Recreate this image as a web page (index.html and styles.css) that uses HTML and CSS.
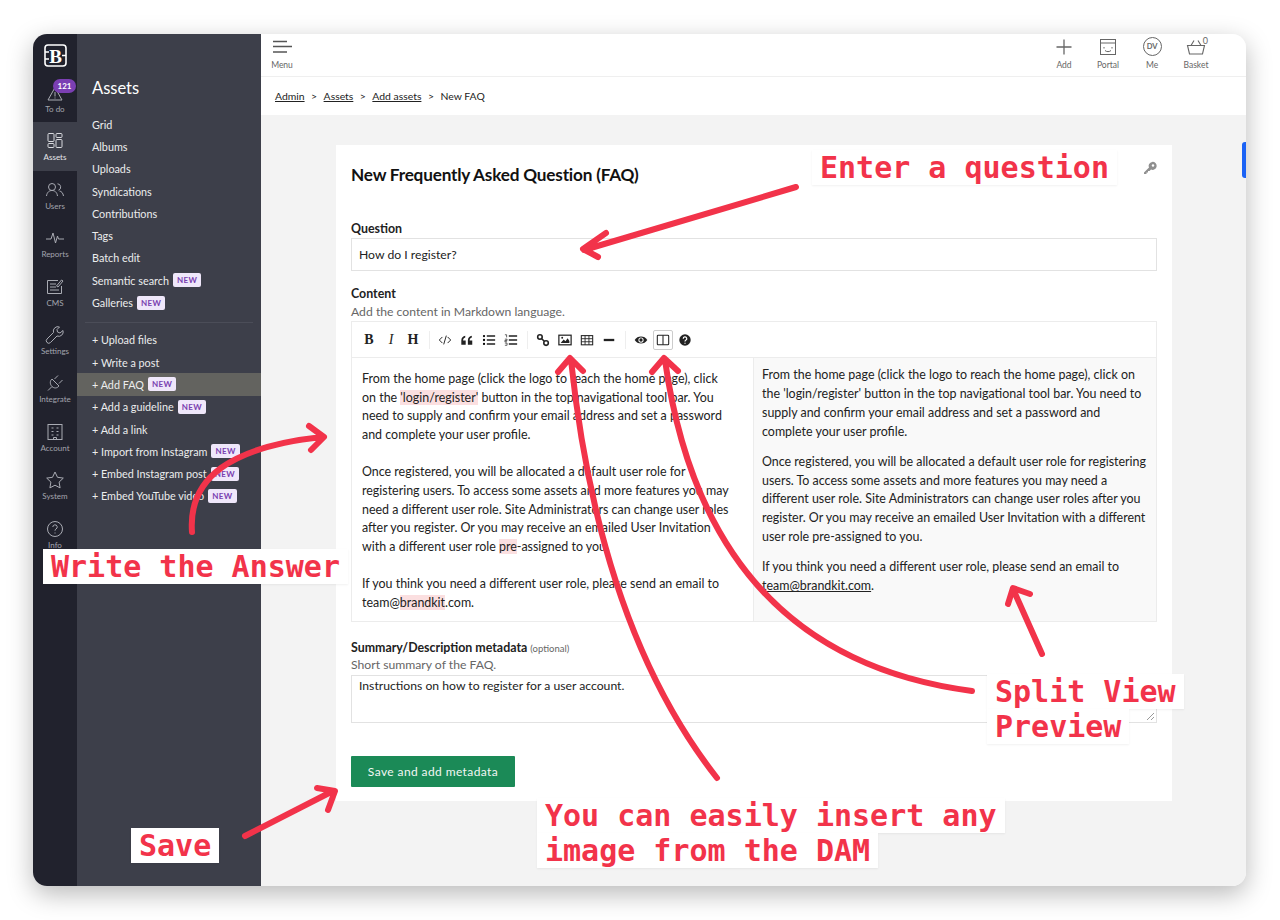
FILE: index.html
```html
<!DOCTYPE html>
<html lang="en">
<head>
    <meta charset="UTF-8">
    <title>New FAQ</title>
    <link rel="stylesheet" href="styles.css">
</head>
<body>
    <div class="window">
        <nav class="rail">
            <div class="rail-logo">
                <svg width="23" height="23" viewBox="0 0 23 23"><rect x="1" y="1" width="21" height="21" rx="3" fill="none" stroke="#fff" stroke-width="1.6"/><path d="M1 8h4M1 15h4M18 11.500h4" stroke="#fff" stroke-width="1.400"/><text x="11.500" y="18.500" text-anchor="middle" class="logo-b">B</text></svg>
            </div>
            <a class="rail-item">
                <span class="count">121</span>
                <svg class="rail-icon" viewBox="0 0 20 20"><path d="M10 4.500 3 17h14zM10 9v4.500M10 14.500v1"/></svg>
                To do
            </a>
            <a class="rail-item active">
                <svg class="rail-icon" viewBox="0 0 20 20"><rect x="3" y="2.500" width="6" height="8" rx="1"/><rect x="11" y="2.500" width="6" height="4" rx="1"/><rect x="3" y="12.500" width="6" height="4" rx="1"/><rect x="11" y="8.500" width="6" height="8" rx="1"/></svg>
                Assets
            </a>
            <a class="rail-item">
                <svg class="rail-icon" viewBox="0 0 20 20"><circle cx="7" cy="7" r="3.500"/><path d="M1.500 16c.5-4 3-5.500 5.500-5.500s5 1.500 5.500 5.500"/><path d="M12.500 3.800a3.300 3.300 0 0 1 1 6.400M14.500 11c2 .4 3.500 2 4 5"/></svg>
                Users
            </a>
            <a class="rail-item">
                <svg class="rail-icon" viewBox="0 0 20 20"><path d="M1 11h5l2-6 2.500 10 2-7 1 3h5.500"/></svg>
                Reports
            </a>
            <a class="rail-item">
                <svg class="rail-icon" viewBox="0 0 20 20"><path d="M16.500 9v7.500h-14v-13H13M5 7h6M5 10h6M5 13h9M13 10l5-6-1.500-1-5 6z"/></svg>
                CMS
            </a>
            <a class="rail-item">
                <svg class="rail-icon" viewBox="0 0 20 20"><path d="M18 5.500 15 8l-2.500-1-.5-2.500L14.500 2a4.500 4.500 0 0 0-6 5.500L2 14a2 2 0 0 0 3.500 3.500L12 11a4.500 4.500 0 0 0 6-5.500z"/></svg>
                Settings
            </a>
            <a class="rail-item">
                <svg class="rail-icon" viewBox="0 0 20 20"><path d="M7 6l7 7c-2 2.500-5 2.500-7 .5S4.500 8 7 6zM7 13.500 3 17.500M9.500 6 13 2.500M14 10.500 17.500 7"/></svg>
                Integrate
            </a>
            <a class="rail-item">
                <svg class="rail-icon" viewBox="0 0 20 20"><rect x="3" y="2.500" width="14" height="15"/><path d="M6.500 6h2M11.500 6h2M6.500 9.500h2M11.500 9.500h2M6.500 13h2M11.500 13h2M8.500 17.500v-2h3v2"/></svg>
                Account
            </a>
            <a class="rail-item">
                <svg class="rail-icon" viewBox="0 0 20 20"><path d="m10 2 2.500 5.300 5.800.8-4.200 4 1 5.800L10 15.200l-5.100 2.700 1-5.800-4.200-4 5.800-.8z"/></svg>
                System
            </a>
            <a class="rail-item">
                <svg class="rail-icon" viewBox="0 0 20 20"><circle cx="10" cy="10" r="7.500"/><path d="M7.800 8a2.200 2.200 0 1 1 3.200 2c-.7.400-1 .9-1 1.700M10 13.500v1"/></svg>
                Info
            </a>
        </nav>

        <aside class="panel">
            <h2 class="panel-title">Assets</h2>
            <ul class="panel-list">
                <li>Grid</li>
                <li>Albums</li>
                <li>Uploads</li>
                <li>Syndications</li>
                <li>Contributions</li>
                <li>Tags</li>
                <li>Batch edit</li>
                <li>Semantic search <span class="new">NEW</span></li>
                <li>Galleries <span class="new">NEW</span></li>
            </ul>
            <ul class="panel-list second">
                <li>+ Upload files</li>
                <li>+ Write a post</li>
                <li class="current">+ Add FAQ <span class="new">NEW</span></li>
                <li>+ Add a guideline <span class="new">NEW</span></li>
                <li>+ Add a link</li>
                <li>+ Import from Instagram <span class="new">NEW</span></li>
                <li>+ Embed Instagram post <span class="new">NEW</span></li>
                <li>+ Embed YouTube video <span class="new">NEW</span></li>
            </ul>
        </aside>

        <main class="main">
            <header class="topbar">
                <a class="tool menu">
                    <svg width="20" height="14" viewBox="0 0 20 14"><path d="M1 1.500h14M1 6.500h19M1 12h14" stroke="#555" stroke-width="1.300" fill="none"/></svg>
                    Menu
                </a>
                <div class="tools">
                    <a class="tool">
                        <svg width="20" height="20" viewBox="0 0 20 20"><path d="M10 2.500v15M2.500 10h15" stroke="#666" stroke-width="1.300"/></svg>
                        Add
                    </a>
                    <a class="tool">
                        <svg width="20" height="20" viewBox="0 0 20 20" fill="none" stroke="#666" stroke-width="1"><rect x="2.500" y="2.500" width="15" height="15"/><path d="M2.500 6h15M6 10v1.500M14 10v1.500M7 13.500c1.500 1.500 4.500 1.500 6 0"/></svg>
                        Portal
                    </a>
                    <a class="tool">
                        <span class="avatar">DV</span>
                        Me
                    </a>
                    <a class="tool">
                        <span class="basket-count">0</span>
                        <svg width="20" height="20" viewBox="0 0 20 20" fill="none" stroke="#666" stroke-width="1.100"><path d="M1.500 8.500h17L16.500 17h-13zM5 8.500 8 3.500M15 8.500l-3-5"/></svg>
                        Basket
                    </a>
                </div>
            </header>
            <div class="crumbs">
                <a>Admin</a><span>&gt;</span><a>Assets</a><span>&gt;</span><a>Add assets</a><span>&gt;</span>New FAQ
            </div>
            <div class="content">
                <section class="card">
                    <div class="card-head">
                        <h1>New Frequently Asked Question (FAQ)</h1>
                        <svg class="key" width="14" height="14" viewBox="0 0 14 14"><path d="M1 11.500 6 6.500a4 4 0 1 1 2 2L6.500 10 5 10v1.500H3.500V13H1z" fill="#8f8f8f"/><circle cx="10" cy="4.500" r="1.200" fill="#fff"/></svg>
                    </div>

                    <div class="field first">
                        <label>Question</label>
                        <div class="input">How do I register?</div>
                    </div>

                    <div class="field content-field">
                        <label>Content</label>
                        <p class="help">Add the content in Markdown language.</p>
                        <div class="editor">
                            <div class="toolbar">
                                <b class="tb-letter">B</b>
                                <i class="tb-letter">I</i>
                                <b class="tb-letter">H</b>
                                <span class="sep"></span>
                                <svg class="tb" viewBox="0 0 16 16"><path d="M5 4.500 1.500 8 5 11.500M11 4.500 14.500 8 11 11.500M9.500 3 6.500 13" fill="none" stroke="#222" stroke-width="1.100"/></svg>
                                <svg class="tb" viewBox="0 0 16 16"><path d="M1.500 8.500h5v5h-5zM1.500 8.500C1.500 5 3.500 3.500 6 3v2C4.500 5.500 3.500 6.500 3.500 8.500zM9 8.500h5v5H9zM9 8.500C9 5 11 3.500 13.500 3v2C12 5.500 11 6.500 11 8.500z" fill="#222"/></svg>
                                <svg class="tb" viewBox="0 0 16 16"><path d="M5.500 3.500H15M5.500 8H15M5.500 12.500H15" stroke="#222" stroke-width="1.800"/><circle cx="2.300" cy="3.500" r="1.300"/><circle cx="2.300" cy="8" r="1.300"/><circle cx="2.300" cy="12.500" r="1.300"/></svg>
                                <svg class="tb" viewBox="0 0 16 16"><path d="M5.500 3.500H15M5.500 8H15M5.500 12.500H15" stroke="#222" stroke-width="1.800"/><path d="M1 2h2v3M1 7h2.500v1.500H1V10h2.500M1 11.500h2.500V14H1" fill="none" stroke="#222" stroke-width=".8"/></svg>
                                <span class="sep"></span>
                                <svg class="tb" viewBox="0 0 16 16"><g fill="none" stroke="#222" stroke-width="1.800"><circle cx="4.500" cy="4.500" r="2.600"/><circle cx="11.500" cy="11.500" r="2.600"/><path d="m6.500 6.500 3 3"/></g></svg>
                                <svg class="tb" viewBox="0 0 16 16"><rect x="1" y="2.500" width="14" height="11" fill="none" stroke="#222" stroke-width="1.400"/><path d="M3 11.500 6.500 7.500 8.500 9.500 11 6l2 3v2.500z" fill="#222"/><circle cx="4.800" cy="5.500" r="1.100" fill="#222"/></svg>
                                <svg class="tb" viewBox="0 0 16 16"><rect x="1.500" y="3" width="13" height="10.500" fill="none" stroke="#222" stroke-width="1.200"/><path d="M1.500 6.500h13M1.500 10h13M5.800 3v10.500M10.200 3v10.500" stroke="#222" stroke-width="1"/></svg>
                                <svg class="tb" viewBox="0 0 16 16"><path d="M2 8h12" stroke="#222" stroke-width="2.600"/></svg>
                                <span class="sep"></span>
                                <svg class="tb" viewBox="0 0 16 16"><path d="M.8 8C2.500 5.200 5 4 8 4s5.500 1.200 7.200 4C13.500 10.800 11 12 8 12S2.500 10.800.8 8z" fill="#222"/><circle cx="8" cy="8" r="3" fill="#fff"/><circle cx="8" cy="8" r="1.900" fill="#222"/></svg>
                                <span class="tb-on"><svg class="tb" viewBox="0 0 16 16"><rect x="1.500" y="2.500" width="13" height="11" rx="1" fill="none" stroke="#222" stroke-width="1.200"/><path d="M8 2.500v11" stroke="#222" stroke-width="1.200"/></svg></span>
                                <svg class="tb" viewBox="0 0 16 16"><circle cx="8" cy="8" r="6.500" fill="#222"/><path d="M6 6.500A2 2 0 1 1 8.800 8.300C8.200 8.600 8 9 8 9.600M8 11v1.200" fill="none" stroke="#fff" stroke-width="1.400"/></svg>
                            </div>
                            <div class="panes">
                                <div class="pane source">
                                    <p>From the home page (click the logo to reach the home page), click<br>on the <mark>'login/register'</mark> button in the top navigational tool bar. You<br>need to supply and confirm your email address and set a password<br>and complete your user profile.</p>
                                    <p>Once registered, you will be allocated a default user role for<br>registering users. To access some assets and more features you may<br>need a different user role. Site Administrators can change user roles<br>after you register. Or you may receive an emailed User Invitation<br>with a different user role <mark>pre</mark>-assigned to you.</p>
                                    <p>If you think you need a different user role, please send an email to<br>team@<mark>brandkit</mark>.com.</p>
                                </div>
                                <div class="pane preview">
                                    <p>From the home page (click the logo to reach the home page), click on<br>the 'login/register' button in the top navigational tool bar. You need to<br>supply and confirm your email address and set a password and<br>complete your user profile.</p>
                                    <p>Once registered, you will be allocated a default user role for registering<br>users. To access some assets and more features you may need a<br>different user role. Site Administrators can change user roles after you<br>register. Or you may receive an emailed User Invitation with a different<br>user role pre-assigned to you.</p>
                                    <p>If you think you need a different user role, please send an email to<br><u>team@brandkit.com</u>.</p>
                                </div>
                            </div>
                        </div>
                    </div>

                    <div class="field summary">
                        <label>Summary/Description metadata <small>(optional)</small></label>
                        <p class="help">Short summary of the FAQ.</p>
                        <div class="input area">Instructions on how to register for a user account.
                            <svg class="grip" width="9" height="9" viewBox="0 0 9 9"><path d="M1 8 8 1M5 8 8 5" stroke="#999" stroke-width="1" fill="none"/></svg>
                        </div>
                    </div>

                    <button class="save">Save and add metadata</button>
                </section>
            </div>
            <span class="scroll-mark"></span>
        </main>
    </div>

    <!-- annotations drawn on top of the screenshot -->
    <div class="notes">
        <svg class="arrows" width="1280" height="920" viewBox="0 0 1280 920">
            <path d="M796 187 584 250M606 233 583 249 598 257"/>
            <path d="M192 532C188 478 230 447 322 437M309 426 324 437 311 450"/>
            <path d="M717 778C640 680 590 540 571 360M558 372 570 358 583 371"/>
            <path d="M972 691C850 675 700 610 665 360M652 372 664 358 678 371"/>
            <path d="M1042 654 1013 589M1008 604 1013 588 1030 594"/>
            <path d="M245 836 333 791M317 788 335 791 328 810"/>
        </svg>
        <div class="note n-question"><span>Enter a question</span></div>
        <div class="note n-answer"><span>Write the Answer</span></div>
        <div class="note n-save"><span>Save</span></div>
        <div class="note n-split"><span>Split View</span><span>Preview</span></div>
        <div class="note n-image"><span>You can easily insert any</span><span>image from the DAM</span></div>
    </div>
</body>
</html>
```

FILE: styles.css
```css
* { box-sizing: border-box; margin: 0; padding: 0; }
html, body { height: 100%; }
body {
    background: #fff;
    font-family: 'Lato', 'Open Sans', Arial, sans-serif;
    color: #222;
    overflow: hidden;
    padding: 34px 34px 34px 33px;
}
.window {
    display: flex;
    height: 852px;
    border-radius: 14px;
    overflow: hidden;
    box-shadow: 0 8px 26px rgba(0, 0, 0, 0.28);
}

/* icon rail */
.rail {
    width: 44px;
    flex: none;
    background: #21222d;
    display: flex;
    flex-direction: column;
    align-items: stretch;
}
.rail-logo {
    height: 40px;
    padding-top: 10px;
    display: flex;
    justify-content: center;
}
.logo-b { font: bold 19px 'Liberation Serif', serif; fill: #fff; }
.rail-item {
    position: relative;
    height: 48.4px;
    padding-top: 9px;
    display: flex;
    flex-direction: column;
    align-items: center;
    gap: 1px;
    font-size: 8px;
    color: #a3a5ae;
}
.rail-item.active { background: #3d3f4a; color: #e6e6ea; }
.rail-icon {
    width: 20px;
    height: 20px;
    fill: none;
    stroke: #a9abb3;
    stroke-width: 1;
}
.rail-item.active .rail-icon { stroke: #d8d9de; }
.count {
    position: absolute;
    top: 5px;
    left: 20px;
    width: 23px;
    height: 14px;
    border-radius: 7px;
    background: #7b3fb3;
    color: #fff;
    font-size: 8px;
    font-weight: 700;
    line-height: 14px;
    text-align: center;
}

/* second level menu */
.panel {
    width: 184px;
    flex: none;
    background: #3d3f4a;
    color: #eceded;
    font-size: 10.8px;
    padding-top: 42px;
}
.panel-title {
    font-size: 16.5px;
    font-weight: 400;
    color: #fff;
    padding-left: 15px;
    line-height: 24px;
    margin-bottom: 13px;
}
.panel-list { list-style: none; }
.panel-list li {
    height: 22.3px;
    padding-left: 15px;
    display: flex;
    align-items: center;
    gap: 4px;
}
.panel-list li.current { background: #63635f; }
.panel-list.second {
    margin: 8px 8px 0;
    border-top: 1px solid #4b4d58;
    padding-top: 6px;
}
.panel-list.second li { margin: 0 -8px; }
.new {
    background: #efe7fa;
    color: #7a3fb0;
    font-size: 8px;
    font-weight: 700;
    letter-spacing: 0.4px;
    padding: 2px 4px;
    border-radius: 2px;
    line-height: 10px;
}

/* main column */
.main {
    position: relative;
    flex: 1;
    background: #f3f3f3;
    display: flex;
    flex-direction: column;
    min-width: 0;
}
.topbar {
    height: 43px;
    flex: none;
    background: #fff;
    border-bottom: 1px solid #efefef;
    display: flex;
    justify-content: space-between;
    padding: 3px 35px 0 10px;
}
.tools { display: flex; gap: 14px; }
.tool {
    position: relative;
    width: 30px;
    display: flex;
    flex-direction: column;
    align-items: center;
    gap: 3px;
    font-size: 8.5px;
    color: #666;
}
.tool svg { height: 20px; }
.menu { width: 22px; }
.avatar {
    width: 19px;
    height: 19px;
    margin-bottom: 1px;
    border: 1px solid #666;
    border-radius: 50%;
    font-size: 7.5px;
    font-weight: 700;
    line-height: 17px;
    text-align: center;
}
.basket-count {
    position: absolute;
    top: -2px;
    right: 3px;
    font-size: 9px;
}
.crumbs {
    height: 38px;
    flex: none;
    background: #fff;
    padding: 0 14px;
    display: flex;
    align-items: center;
    gap: 6.5px;
    font-size: 10.4px;
    padding-bottom: 1px;
}
.crumbs a { text-decoration: underline; }

.content { padding: 30px 74px 0 75px; }
.card {
    background: #fff;
    height: 656px;
    padding: 19px 15px 14px;
}
.card-head {
    display: flex;
    justify-content: space-between;
    height: 20px;
    align-items: center;
}
.card-head h1 {
    font-size: 17.2px;
    font-weight: 700;
    color: #111;
    letter-spacing: -0.2px;
}
.key { margin-top: -12px; }
.field { margin-top: 14px; }
.field.first { margin-top: 36px; }
.field.summary { margin-top: 17px; }
.field label {
    display: block;
    font-size: 12.4px;
    font-weight: 700;
    line-height: 16px;
    padding-top: 1px;
    margin-bottom: 1px;
    color: #222;
}
.field small { font-size: 9.5px; font-weight: 400; color: #666; }
.help {
    font-size: 12.2px;
    color: #666;
    line-height: 16px;
    margin: -1px 0 2px;
}
.content-field .help { margin: 2px 0 1px; }
.input {
    height: 33px;
    border: 1px solid #e2e2e2;
    padding: 0 7px;
    font-size: 12.2px;
    line-height: 31px;
}
.input.area {
    position: relative;
    height: 48px;
    line-height: 20px;
}
.grip { position: absolute; right: 1px; bottom: 1px; }

/* markdown editor */
.editor { border: 1px solid #ececec; }
.toolbar {
    height: 36px;
    padding: 0 10px;
    display: flex;
    align-items: center;
    gap: 8px;
    border-bottom: 1px solid #ececec;
}
.tb-letter {
    width: 14px;
    font-family: 'Liberation Serif', serif;
    font-size: 14px;
    text-align: center;
    color: #222;
}
.tb { width: 14px; height: 14px; flex: none; display: block; }
.sep { width: 1px; height: 18px; background: #eee; margin-left: 1px; }
.tb-on {
    padding: 2px;
    margin: 0 -3px;
    border: 1px solid #ccc;
    border-radius: 2px;
}
.panes { display: flex; height: 263px; font-size: 12.45px; white-space: nowrap; }
.pane { width: 50%; }
.source { padding: 12px 10px 0 10px; border-right: 1px solid #ececec; }
.source p { line-height: 18.67px; margin-bottom: 18.67px; }
.source mark { background: #fbdfe0; color: inherit; }
.preview { padding: 8px 10px 0 8px; background: #f9f9f9; }
.preview p { line-height: 18.9px; margin-bottom: 11px; }

.save {
    display: block;
    width: 164px;
    height: 31px;
    margin-top: 33px;
    border: none;
    border-radius: 1px;
    background: #1b8a57;
    color: #f2f7f4;
    font-family: inherit;
    font-size: 12px;
    letter-spacing: 0.4px;
}
.scroll-mark {
    position: absolute;
    top: 108px;
    right: 0;
    width: 4px;
    height: 36px;
    background: #1a62f5;
    border-radius: 3px 0 0 3px;
}

/* red notes over the page */
.notes {
    position: absolute;
    top: 0;
    left: 0;
    width: 1280px;
    height: 920px;
    pointer-events: none;
}
.arrows {
    position: absolute;
    top: 0;
    left: 0;
    fill: none;
    stroke: #f2334a;
    stroke-width: 6;
    stroke-linecap: round;
    stroke-linejoin: round;
}
.note {
    position: absolute;
    display: flex;
    flex-direction: column;
    align-items: flex-start;
    font-family: 'DejaVu Sans Mono', 'Liberation Mono', monospace;
    font-size: 30px;
    font-weight: 700;
    line-height: 35px;
    color: #f2334a;
}
.note span {
    background: #fff;
    padding: 0 8px;
    box-shadow: 0 1px 2px rgba(0, 0, 0, 0.06);
    white-space: nowrap;
}
.n-question { left: 812px; top: 150px; }
.n-answer { left: 43px; top: 549px; }
.n-save { left: 131px; top: 828px; }
.n-split { left: 987px; top: 674px; }
.n-image { left: 537px; top: 798px; }
```
